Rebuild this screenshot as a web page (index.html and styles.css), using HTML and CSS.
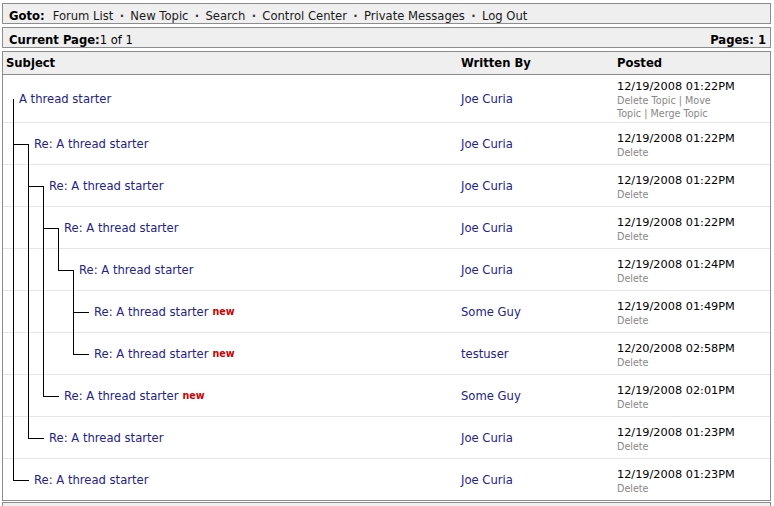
FILE: index.html
```html
<!DOCTYPE html>
<html>
<head>
<meta charset="utf-8">
<title>Thread</title>
<link rel="stylesheet" href="styles.css">
</head>
<body>
<div class="bar nav">
  <b>Goto:</b>
  <span class="navlinks">
    <a href="#">Forum List</a><span class="sep">·</span><a href="#">New Topic</a><span class="sep">·</span><a href="#">Search</a><span class="sep">·</span><a href="#">Control Center</a><span class="sep">·</span><a href="#">Private Messages</a><span class="sep">·</span><a href="#">Log Out</a>
  </span>
</div>
<div class="bar pager">
  <span><b>Current Page:</b>1 of 1</span>
  <b>Pages: 1</b>
</div>
<div class="table">
  <div class="row head">
    <div class="cell">Subject</div>
    <div class="cell">Written By</div>
    <div class="cell">Posted</div>
  </div>

  <div class="row">
    <div class="cell subj"><span class="stem down"></span><a class="t" href="#">A thread starter</a></div>
    <div class="cell auth"><a href="#">Joe Curia</a></div>
    <div class="cell post"><div class="date">12/19/2008 01:22PM</div><div class="mod">Delete Topic | Move Topic | Merge Topic</div></div>
  </div>

  <div class="row">
    <div class="cell subj"><span class="seg tee"></span><span class="stem h down"></span><a class="t" href="#">Re: A thread starter</a></div>
    <div class="cell auth"><a href="#">Joe Curia</a></div>
    <div class="cell post"><div class="date">12/19/2008 01:22PM</div><div class="mod">Delete</div></div>
  </div>

  <div class="row">
    <div class="cell subj"><span class="seg pipe"></span><span class="seg tee"></span><span class="stem h down"></span><a class="t" href="#">Re: A thread starter</a></div>
    <div class="cell auth"><a href="#">Joe Curia</a></div>
    <div class="cell post"><div class="date">12/19/2008 01:22PM</div><div class="mod">Delete</div></div>
  </div>

  <div class="row">
    <div class="cell subj"><span class="seg pipe"></span><span class="seg pipe"></span><span class="seg tee"></span><span class="stem h down"></span><a class="t" href="#">Re: A thread starter</a></div>
    <div class="cell auth"><a href="#">Joe Curia</a></div>
    <div class="cell post"><div class="date">12/19/2008 01:22PM</div><div class="mod">Delete</div></div>
  </div>

  <div class="row">
    <div class="cell subj"><span class="seg pipe"></span><span class="seg pipe"></span><span class="seg pipe"></span><span class="seg elbow"></span><span class="stem h down"></span><a class="t" href="#">Re: A thread starter</a></div>
    <div class="cell auth"><a href="#">Joe Curia</a></div>
    <div class="cell post"><div class="date">12/19/2008 01:24PM</div><div class="mod">Delete</div></div>
  </div>

  <div class="row">
    <div class="cell subj"><span class="seg pipe"></span><span class="seg pipe"></span><span class="seg pipe"></span><span class="seg"></span><span class="seg tee"></span><span class="stem h"></span><a class="t" href="#">Re: A thread starter</a><span class="new">new</span></div>
    <div class="cell auth"><a href="#">Some Guy</a></div>
    <div class="cell post"><div class="date">12/19/2008 01:49PM</div><div class="mod">Delete</div></div>
  </div>

  <div class="row">
    <div class="cell subj"><span class="seg pipe"></span><span class="seg pipe"></span><span class="seg pipe"></span><span class="seg"></span><span class="seg elbow"></span><span class="stem h"></span><a class="t" href="#">Re: A thread starter</a><span class="new">new</span></div>
    <div class="cell auth"><a href="#">testuser</a></div>
    <div class="cell post"><div class="date">12/20/2008 02:58PM</div><div class="mod">Delete</div></div>
  </div>

  <div class="row">
    <div class="cell subj"><span class="seg pipe"></span><span class="seg pipe"></span><span class="seg elbow"></span><span class="stem h"></span><a class="t" href="#">Re: A thread starter</a><span class="new">new</span></div>
    <div class="cell auth"><a href="#">Some Guy</a></div>
    <div class="cell post"><div class="date">12/19/2008 02:01PM</div><div class="mod">Delete</div></div>
  </div>

  <div class="row">
    <div class="cell subj"><span class="seg pipe"></span><span class="seg elbow"></span><span class="stem h"></span><a class="t" href="#">Re: A thread starter</a></div>
    <div class="cell auth"><a href="#">Joe Curia</a></div>
    <div class="cell post"><div class="date">12/19/2008 01:23PM</div><div class="mod">Delete</div></div>
  </div>

  <div class="row">
    <div class="cell subj"><span class="seg elbow"></span><span class="stem h"></span><a class="t" href="#">Re: A thread starter</a></div>
    <div class="cell auth"><a href="#">Joe Curia</a></div>
    <div class="cell post"><div class="date">12/19/2008 01:23PM</div><div class="mod">Delete</div></div>
  </div>
</div>
<div class="bar bottom"></div>
</body>
</html>
```

FILE: styles.css
```css
html, body {
  margin: 0;
  background: #fff;
}
body {
  padding: 3px 3px 0 2px;
  font-family: "DejaVu Sans", Verdana, sans-serif;
  font-size: 11.6px;
  color: #000;
  overflow: hidden;
}
a {
  text-decoration: none;
}
.bar {
  border: 1px solid #8c8c8c;
  background: #efefef;
  height: 14px;
  line-height: 14px;
  padding: 5px 6px 0;
  margin-bottom: 3px;
  display: flex;
  align-items: center;
  white-space: nowrap;
}
.nav b {
  margin-right: 8px;
}
.nav a {
  color: #1a1a1a;
}
.sep {
  display: inline-block;
  width: 17px;
  text-align: center;
  font-weight: bold;
  color: #333;
}
.pager {
  justify-content: space-between;
  padding-right: 4px;
}
.bottom {
  margin-top: 1px;
}
.table {
  border: 1px solid #8c8c8c;
  background: #fff;
}
.row {
  display: grid;
  grid-template-columns: 455px 156px 1fr;
  border-bottom: 1px solid #e6e6e6;
  min-height: 41px;
}
.row:last-child {
  border-bottom: 0;
}
.row.head {
  min-height: 22px;
  background: #efefef;
  border-bottom: 1px solid #8c8c8c;
  font-weight: bold;
}
.cell {
  padding: 0 3px;
  display: flex;
  align-items: center;
}
.head .cell {
  line-height: 22px;
}
.subj {
  align-items: stretch;
}
.subj .t, .subj .new {
  align-self: center;
}
.seg, .stem {
  flex: none;
  margin-bottom: -1px;
  background-repeat: no-repeat;
}
.seg {
  width: 15px;
}
.stem {
  width: 13px;
}
.pipe {
  background-image: linear-gradient(#000, #000);
  background-position: 7px 0;
  background-size: 1px 100%;
}
.tee {
  background-image: linear-gradient(#000, #000), linear-gradient(#000, #000);
  background-position: 7px 0, 7px 50%;
  background-size: 1px 100%, 8px 1px;
}
.elbow {
  background-image: linear-gradient(#000, #000), linear-gradient(#000, #000);
  background-position: 7px 0, 7px 50%;
  background-size: 1px calc(50% + 1px), 8px 1px;
}
.stem.h {
  background-image: linear-gradient(#000, #000);
  background-position: 0 50%;
  background-size: 8px 1px;
}
.stem.down {
  background-image: linear-gradient(#000, #000);
  background-position: 7px 100%;
  background-size: 1px 50%;
}
.stem.h.down {
  background-image: linear-gradient(#000, #000), linear-gradient(#000, #000);
  background-position: 0 50%, 7px 100%;
  background-size: 8px 1px, 1px 50%;
}
.t, .auth a {
  color: #22228c;
}
.new {
  color: #cc0000;
  font-weight: bold;
  font-size: 9.6px;
  margin-left: 4px;
}
.post {
  flex-direction: column;
  align-items: flex-start;
  justify-content: center;
  padding-top: 4px;
  padding-bottom: 2px;
}
.date {
  font-size: 11.3px;
  line-height: 15px;
  white-space: nowrap;
}
.mod {
  font-size: 9.6px;
  line-height: 13px;
  color: #888;
  max-width: 112px;
}
```
